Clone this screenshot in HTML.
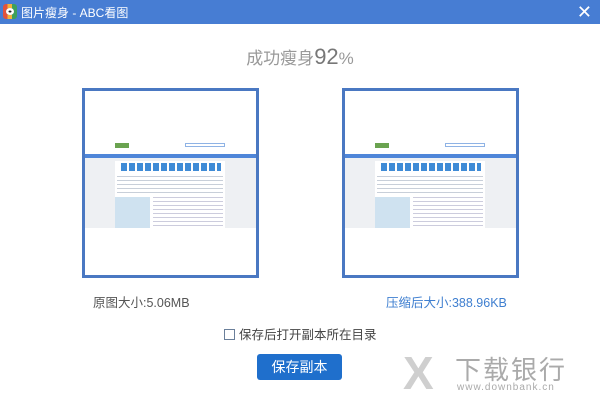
<!DOCTYPE html>
<html><head><meta charset="utf-8"><style>
*{margin:0;padding:0;box-sizing:border-box}
body{width:600px;height:400px;background:#fff;position:relative;overflow:hidden;font-family:"Liberation Sans","Noto Sans CJK SC",sans-serif}
.tb{position:absolute;left:0;top:0;width:600px;height:24px;background:#477dd3}
.tb .t{position:absolute;left:21px;top:4px;color:#fff;font-size:12px}
.ico{position:absolute;left:3px;top:4px;width:14px;height:15px;border-radius:3px;background:linear-gradient(90deg,#e0533e 0 33%,#f2b33d 33% 66%,#3ea05a 66%)}
.ico:after{content:"";position:absolute;left:3px;top:4px;width:8px;height:7px;border-radius:50%;background:#fff;box-shadow:inset 0 0 0 2.5px #fff,inset 0 0 0 4px #222}
.x{position:absolute;right:8px;top:3px;color:#fff;font-size:18px;line-height:18px}
.h{position:absolute;top:44px;left:0;width:600px;text-align:center;color:#999;font-size:17px}
.h b{font-weight:normal;color:#777;font-size:22px}
.fr{position:absolute;top:88px;width:177px;height:190px;border:3px solid #4a78c2}
.th{position:absolute;left:0;top:46px;width:171px;height:91px;background:#eef0f3}
.th .top{position:absolute;left:0;top:0;width:100%;height:17px;background:#fff}
.th .nav{position:absolute;left:0;top:17px;width:100%;height:4px;background:#4f86d9}
.th .pn{position:absolute;left:30px;top:24px;width:110px;height:67px;background:#fff}
.th .img{position:absolute;left:30px;top:60px;width:35px;height:31px;background:#cfe2f0}
.th .lg{position:absolute;left:30px;top:6px;width:14px;height:5px;background:#6aa350}
.th .sb{position:absolute;left:100px;top:6px;width:40px;height:4px;border:1px solid #8fb3e5}
.th .ics{position:absolute;left:36px;top:26px;width:100px;height:8px;background:repeating-linear-gradient(90deg,#3f8bd6 0 6px,#fff 6px 8px)}
.th .ln{position:absolute;left:32px;top:39px;width:106px;height:17px;background:repeating-linear-gradient(180deg,#c8cfd9 0 1px,#fff 1px 4px)}
.th .rl{position:absolute;left:68px;top:60px;width:70px;height:30px;background:repeating-linear-gradient(180deg,#ccd 0 1px,#fff 1px 4px)}
.lb{position:absolute;top:292px;font-size:12.5px}
.cb{position:absolute;left:224px;top:324px;font-size:12.5px;color:#444}
.cb i{display:inline-block;width:11px;height:11px;border:1px solid #6a7f9a;vertical-align:-1px;margin-right:4px}
.btn{position:absolute;left:257px;top:354px;width:85px;height:26px;background:#1f6fcc;border-radius:3px;color:#fff;font-size:14px;text-align:center;line-height:26px}
.wm{position:absolute;left:403px;top:350px;color:#bbb}
.wm .a{position:absolute;left:0;top:0;font-size:46px;line-height:46px;color:#cfcfcf;font-weight:bold}
.wm .b{position:absolute;left:52px;top:0;font-size:26px;color:#aaa;white-space:nowrap;letter-spacing:2px}
.wm .c{position:absolute;left:54px;top:32px;font-size:10px;color:#aaa;white-space:nowrap;letter-spacing:1px}
</style></head><body>
<div class="tb"><div class="ico"></div><div class="t">图片瘦身 - ABC看图</div><div class="x">✕</div></div>
<div class="h">成功瘦身<b>92</b>%</div>
<div class="fr" style="left:82px"><div class="th"><div class="top"></div><div class="lg"></div><div class="sb"></div><div class="nav"></div><div class="pn"></div><div class="ics"></div><div class="ln"></div><div class="img"></div><div class="rl"></div></div></div>
<div class="fr" style="left:342px"><div class="th"><div class="top"></div><div class="lg"></div><div class="sb"></div><div class="nav"></div><div class="pn"></div><div class="ics"></div><div class="ln"></div><div class="img"></div><div class="rl"></div></div></div>
<div class="lb" style="left:93px;color:#555">原图大小:5.06MB</div>
<div class="lb" style="left:386px;color:#3f7fd0">压缩后大小:388.96KB</div>
<div class="cb"><i></i>保存后打开副本所在目录</div>
<div class="btn">保存副本</div>
<div class="wm"><div class="a">X</div><div class="b">下载银行</div><div class="c">www.downbank.cn</div></div>
</body></html>
